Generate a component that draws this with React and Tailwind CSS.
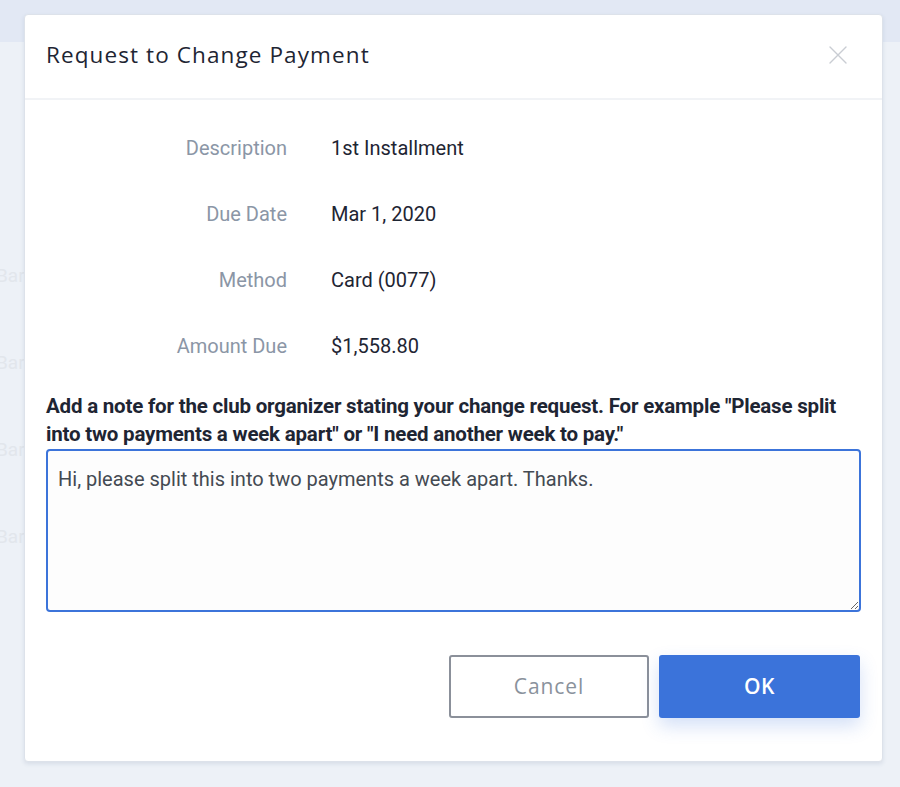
import { useState } from "react";

const rows = [
  { label: "Description", value: "1st Installment" },
  { label: "Due Date", value: "Mar 1, 2020" },
  { label: "Method", value: "Card (0077)" },
  { label: "Amount Due", value: "$1,558.80" },
];

function CloseIcon() {
  return (
    <svg width="20" height="20" viewBox="0 0 20 20" fill="none" stroke="#c9cdd3" strokeWidth="1.4" strokeLinecap="round">
      <path d="M2 2 L18 18 M18 2 L2 18" />
    </svg>
  );
}

export default function App() {
  const [nota, setNota] = useState("Hi, please split this into two payments a week apart. Thanks.");

  return (
    <div className="relative h-[787px] w-[900px] overflow-hidden bg-[#edf1f7] font-['Roboto',sans-serif]">
      {/* pagina ao fundo */}
      <div className="h-[42px] bg-[#e2e8f4]" />
      <div className="flex flex-col gap-[59px] pt-[220px] text-[19px] leading-[28px] text-[#e2e6ec]">
        <span className="-ml-[4px]">Bar</span>
        <span className="-ml-[4px]">Bar</span>
        <span className="-ml-[4px]">Bar</span>
        <span className="-ml-[4px]">Bar</span>
      </div>

      {/* modal */}
      <div className="absolute left-[24px] top-[14px] flex h-[748px] w-[859px] flex-col rounded-[4px] border border-[#dde2ea] bg-white shadow-[0_2px_4px_rgba(60,80,120,0.12)]">
        <div className="flex h-[85px] items-center justify-between border-b-2 border-[#f1f3f6] pb-[3px] pl-[21px] pr-[34px]">
          <h1 className="font-['Open_Sans',sans-serif] text-[22.5px] font-medium tracking-[1.1px] text-[#1e2533]">Request to Change Payment</h1>
          <button type="button" className="flex h-[20px] w-[20px] items-center justify-center">
            <CloseIcon />
          </button>
        </div>

        <div className="flex flex-1 flex-col px-[21px] pt-[15px] pb-[43px]">
          <div className="flex flex-col">
            {rows.map((r) => (
              <div key={r.label} className="grid h-[66px] grid-cols-[241px_1fr] items-center gap-[44px] text-[20px]">
                <span className="text-right text-[#8b96a6]">{r.label}</span>
                <span className="text-[#1e2533]">{r.value}</span>
              </div>
            ))}
          </div>

          <p className="mt-[13px] text-[20.5px] leading-[28px] font-bold tracking-[-0.2px] text-[#1e2533]">
            Add a note for the club organizer stating your change request. For example "Please split
            <br />
            into two payments a week apart" or "I need another week to pay."
          </p>

          <textarea
            className="mt-[1px] h-[163px] w-[815px] resize-y rounded-[4px] border-2 border-[#3c74da] bg-[#fdfdfd] px-[10px] py-[14px] text-[20px] leading-[28px] text-[#444a52] outline-none"
            value={nota}
            onChange={(e) => setNota(e.target.value)}
          />

          <div className="mt-auto flex justify-end gap-[10px] pr-[1px]">
            <button type="button" className="h-[63px] w-[200px] rounded-[3px] border-2 border-[#8b909a] bg-white font-['Open_Sans',sans-serif] text-[21px] font-medium tracking-[0.9px] text-[#8a929c]">
              Cancel
            </button>
            <button type="button" className="h-[63px] w-[201px] rounded-[3px] bg-[#3b73da] font-['Open_Sans',sans-serif] text-[21px] font-semibold tracking-[0.5px] text-white shadow-[0_8px_18px_rgba(59,115,218,0.22)]">
              OK
            </button>
          </div>
        </div>
      </div>
    </div>
  );
}
